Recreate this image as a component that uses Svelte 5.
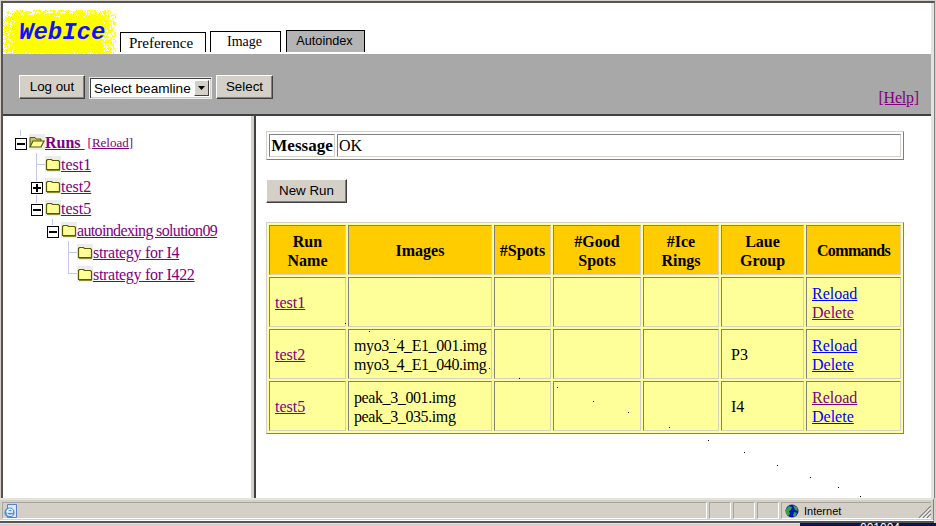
<script>
  let seed = 7;
  function rnd() {
    seed = (seed * 16807) % 2147483647;
    return seed / 2147483647;
  }
  function logoPath() {
    let d = '';
    for (let y = 0; y < 44; y++) {
      for (let x = 0; x < 113; x++) {
        const dx = Math.max(13 - x, x - 97, 0);
        const dy = Math.max(7 - y, y - 41, 0);
        const dist = dx + dy * 1.5;
        let p = 1;
        if (dist > 0) p = Math.max(0.97 - dist * 0.045, 0.2);
        if (y < 6 && x > 70) p = Math.min(p, 0.9);
        if (rnd() < p) d += `M${x} ${y}h1v1h-1z`;
      }
    }
    return d;
  }
  const logo = logoPath();

  const tree = [
    { depth: 1, label: 'test1', fit: '' },
    { depth: 1, label: 'test2', box: 'plus', fit: '' },
    { depth: 1, label: 'test5', box: 'minus', fit: '' },
    { depth: 2, label: 'autoindexing solution09', box: 'minus', fit: 'tighter' },
    { depth: 3, label: 'strategy for I4', fit: 'tight' },
    { depth: 3, label: 'strategy for I422', fit: 'tight' }
  ];

  const rows = [
    { name: 'test1', images: [], laue: '', reloadSeen: false, deleteSeen: true },
    { name: 'test2', images: ['myo3_4_E1_001.img', 'myo3_4_E1_040.img'], laue: 'P3', reloadSeen: false, deleteSeen: false },
    { name: 'test5', images: ['peak_3_001.img', 'peak_3_035.img'], laue: 'I4', reloadSeen: true, deleteSeen: false }
  ];

  const dots = [
    [345, 322], [369, 330], [394, 338], [453, 357], [489, 367], [519, 377], [557, 386], [593, 400],
    [628, 411], [669, 426], [708, 439], [744, 451], [777, 464], [810, 476], [838, 486], [860, 495]
  ];
</script>

<div class="window">
  <div class="page">
    <header class="head">
      <div class="logo">
        <svg width="113" height="44" viewBox="0 0 113 44"><path d={logo} fill="#ffff00" /></svg>
        <span class="logo-text">WebIce</span>
      </div>
      <div class="tab t1">Preference</div>
      <div class="tab t2">Image</div>
      <div class="tab t3">Autoindex</div>
    </header>

    <div class="band">
      <button class="btn logout">Log out</button>
      <div class="select">
        <span class="select-text">Select beamline</span>
        <span class="arrow"><svg width="7" height="4" viewBox="0 0 7 4"><path d="M0 0h7L3.500 4z" fill="#000" /></svg></span>
      </div>
      <button class="btn sel">Select</button>
      <a class="help visited" href="#h">[Help]</a>
    </div>

    <div class="main">
      <aside class="left">
        <svg class="lines" width="248" height="382" viewBox="0 0 248 382">
          <g stroke="#c6c6f0" fill="none" shape-rendering="crispEdges">
            <path d="M17.500 14v6" />
            <path d="M33.500 37v28M33.500 48h9M33.500 79v8" />
            <path d="M49.500 103v6" />
            <path d="M65.500 125v33M65.500 136h9M65.500 157.500h9" />
          </g>
        </svg>
        <div class="row root">
          <span class="box"><i class="bar"></i></span>
          <span class="folder">
            <svg width="16" height="16" viewBox="0 0 16 16">
              <path d="M1 13V3.500h5l1 1.500h5v2" fill="#c9c46a" stroke="#5a5a00" />
              <path d="M1 13l3-6h11l-3 6z" fill="#ffff99" stroke="#5a5a00" stroke-width="1.200" />
            </svg>
          </span>
          <a class="visited runs" href="#r">Runs&nbsp;</a>
          <a class="visited small" href="#r">[Reload]</a>
        </div>
        {#each tree as item}
          <div class="row" style="padding-left:{item.depth * 16}px">
            <span class="box" class:none={!item.box}>
              {#if item.box}
                <i class="bar"></i>
                {#if item.box === 'plus'}<i class="bar v"></i>{/if}
              {/if}
            </span>
            <span class="folder">
              <svg width="16" height="16" viewBox="0 0 16 16">
                <path d="M1.500 13.500V4.500l1-1h4l1 1h6l1 1v8z" fill="#ffff99" stroke="#5a5a00" stroke-width="1.200" />
                <path d="M2 14.500h13" stroke="#8a8a40" />
              </svg>
            </span>
            <a class="visited {item.fit}" href="#t">{item.label}</a>
          </div>
        {/each}
      </aside>

      <div class="divider"></div>

      <section class="right">
        <table class="msg">
          <tbody>
            <tr>
              <th>Message</th>
              <td>OK</td>
            </tr>
          </tbody>
        </table>

        <button class="btn newrun">New Run</button>

        <table class="data">
          <colgroup>
            <col class="c1" /><col class="c2" /><col class="c3" /><col class="c4" />
            <col class="c5" /><col class="c6" /><col class="c7" />
          </colgroup>
          <thead>
            <tr>
              <th>Run<br />Name</th>
              <th>Images</th>
              <th>#Spots</th>
              <th>#Good<br />Spots</th>
              <th>#Ice<br />Rings</th>
              <th>Laue<br />Group</th>
              <th class="tighter">Commands</th>
            </tr>
          </thead>
          <tbody>
            {#each rows as r}
              <tr>
                <td><a class="visited" href="#n">{r.name}</a></td>
                <td class="images">
                  {#each r.images as img}<div>{img}</div>{/each}
                </td>
                <td></td>
                <td></td>
                <td></td>
                <td>{#if r.laue}&nbsp;{r.laue}{/if}</td>
                <td>
                  <div><a class:visited={r.reloadSeen} href="#l">Reload</a></div>
                  <div><a class:visited={r.deleteSeen} href="#d">Delete</a></div>
                </td>
              </tr>
            {/each}
          </tbody>
        </table>
      </section>
    </div>
  </div>

  <footer class="status">
    <span class="pane first">
      <svg width="16" height="16" viewBox="0 0 16 16">
        <path d="M4.500 1.500h9v13h-9z" fill="#dbe6f7" stroke="#5b7fc0" />
        <circle cx="6.500" cy="9.500" r="5" fill="#4a8fe0" />
        <path d="M3.500 9h6.500M4 9c0-3 5-4 5.500-1M9.500 11.500c-1.500 1.500-4.500 1-5.500-1" stroke="#fff" stroke-width="1.300" fill="none" />
      </svg>
    </span>
    <span class="pane fill"></span>
    <span class="pane small-pane"></span>
    <span class="pane small-pane"></span>
    <span class="pane small-pane"></span>
    <span class="pane zone">
      <svg width="14" height="14" viewBox="0 0 14 14">
        <circle cx="7" cy="7" r="6.500" fill="#0a10c8" />
        <path d="M1 5l3-3 3 1-1 3-2 1 1 3-2 2-2-3zM8 1l4 2 1 4-3-1zM9 8l3 1-2 4-2-1z" fill="#35a832" />
      </svg>
      <span>Internet</span>
      <svg class="grip" width="13" height="13" viewBox="0 0 13 13">
        <path d="M1 13L13 1M5 13l8-8M9 13l4-4" stroke="#808080" stroke-width="1.200" />
        <path d="M2.500 13L13 2.500M6.500 13L13 6.500M10.500 13L13 10.500" stroke="#fff" />
      </svg>
    </span>
  </footer>
  <div class="tail"></div>

  <div class="taskbar"><span>001004</span></div>

  {#each dots as d}
    <i class="dot" style="left:{d[0]}px;top:{d[1]}px"></i>
  {/each}
</div>

<style>
  :global(body) {
    margin: 0;
    background: #d4d0c8;
  }
  .window {
    position: relative;
    width: 936px;
    height: 526px;
    overflow: hidden;
    box-sizing: border-box;
    background: #d4d0c8;
    border-top: 1px solid #d4d0c8;
    font: 16px/19px "Liberation Serif", serif;
    color: #000;
  }
  .page {
    box-sizing: border-box;
    width: 934px;
    border-top: 2px solid #555;
    border-left: 2px solid #555;
    border-right: 1px solid #808080;
    margin-left: 1px;
    padding-right: 3px;
    background: #e6e3dc;
  }
  a {
    color: #0000ff;
  }
  a.visited {
    color: #800080;
  }
  .tight {
    letter-spacing: -0.3px;
  }
  .tighter {
    letter-spacing: -0.65px;
  }
  .head {
    display: flex;
    align-items: flex-end;
    height: 51px;
    background: #fff;
  }
  .logo {
    position: relative;
    width: 113px;
    height: 44px;
    margin-right: 4px;
    align-self: flex-end;
    flex: none;
  }
  .logo svg {
    display: block;
  }
  .logo-text {
    position: absolute;
    left: 16px;
    top: 10px;
    font: italic bold 24px/26px "Liberation Mono", monospace;
    color: #1010ff;
  }
  .tab {
    box-sizing: border-box;
    border: 1px solid #000;
    border-bottom: 0;
    text-align: center;
    background: #fff;
    margin-bottom: 2px;
  }
  .t1 {
    width: 86px;
    height: 20px;
    font-size: 15px;
    line-height: 21px;
    margin-right: 4px;
    padding-right: 4px;
  }
  .t2 {
    width: 71px;
    height: 21px;
    font-size: 14px;
    line-height: 20px;
    margin-right: 5px;
    padding-right: 2px;
  }
  .t3 {
    width: 79px;
    height: 22px;
    font: 12.700px/21px "Liberation Sans", sans-serif;
    background: #b4b4b4;
    padding-right: 2px;
  }
  .band {
    display: flex;
    align-items: flex-start;
    height: 60px;
    box-sizing: content-box;
    padding-left: 16px;
    background: #a8a8a8;
    border-bottom: 2px solid #404040;
    position: relative;
  }
  .btn {
    box-sizing: border-box;
    display: block;
    padding: 0;
    height: 24px;
    font: 13.330px/20px "Liberation Sans", sans-serif;
    color: #000;
    background: #d4d0c8;
    border: 1px solid;
    border-color: #fff #404040 #404040 #fff;
    box-shadow: inset -1px -1px 0 #808080;
  }
  .logout {
    width: 66px;
    margin-top: 21px;
    margin-right: 4px;
  }
  .sel {
    width: 57px;
    margin-top: 21px;
    margin-left: 4px;
  }
  .select {
    box-sizing: border-box;
    display: flex;
    align-items: center;
    justify-content: space-between;
    width: 123px;
    height: 22px;
    margin-top: 23px;
    padding: 0 2px 0 4px;
    background: #fff;
    border: 1px solid #e8e8e8;
    box-shadow: inset 1px 1px 0 #404040, inset -1px -1px 0 #d4d0c8;
    font: 13.600px/18px "Liberation Sans", sans-serif;
    white-space: nowrap;
  }
  .select-text {
    padding-top: 1px;
  }
  .arrow {
    box-sizing: border-box;
    display: flex;
    align-items: center;
    justify-content: center;
    flex: none;
    width: 15px;
    height: 16px;
    background: #d4d0c8;
    border: 1px solid;
    border-color: #fff #404040 #404040 #fff;
  }
  .help {
    margin-left: auto;
    margin-right: 12px;
    margin-top: 34px;
    letter-spacing: -0.2px;
  }
  .main {
    display: flex;
    height: 382px;
  }
  .left {
    position: relative;
    width: 248px;
    box-sizing: border-box;
    padding: 15px 0 0 12px;
    background: #fff;
    flex: none;
  }
  .lines {
    position: absolute;
    left: 0;
    top: 0;
    pointer-events: none;
  }
  .row {
    position: relative;
    display: flex;
    align-items: center;
    height: 22px;
    white-space: nowrap;
  }
  .box {
    box-sizing: border-box;
    position: relative;
    display: block;
    flex: none;
    width: 12px;
    height: 12px;
    margin: 4px 2px 0 0;
    border: 1px solid #000;
    background: #fff;
  }
  .box.none {
    border: 0;
    background: none;
  }
  .bar {
    position: absolute;
    left: 1px;
    top: 4px;
    width: 8px;
    height: 2px;
    background: #000;
  }
  .bar.v {
    left: 4px;
    top: 1px;
    width: 2px;
    height: 8px;
  }
  .folder {
    display: block;
    flex: none;
    width: 16px;
    height: 16px;
    background: #ececec;
  }
  .folder svg {
    display: block;
  }
  .runs {
    font-weight: bold;
  }
  .small {
    font-size: 13px;
    margin-left: 3px;
  }
  .divider {
    width: 5px;
    flex: none;
    box-sizing: border-box;
    background: #d4d0c8;
    border-right: 2px solid #404040;
  }
  .right {
    flex: 1;
    min-width: 0;
    box-sizing: border-box;
    padding: 15px 0 0 10px;
    background: #fff;
  }
  table {
    box-sizing: border-box;
    width: 638px;
    table-layout: fixed;
    border-collapse: separate;
    border-spacing: 2px;
    border: 1px solid;
    border-color: #d4d0c8 #808080 #808080 #d4d0c8;
  }
  th,
  td {
    box-sizing: border-box;
    padding: 0;
    border: 1px solid;
    border-color: #808080 #d4d0c8 #d4d0c8 #808080;
  }
  .msg {
    height: 29px;
  }
  .msg th {
    width: 66px;
    height: 23px;
    font-size: 17px;
    text-align: center;
    padding: 0;
  }
  .msg td {
    padding-left: 1px;
  }
  .newrun {
    width: 81px;
    margin: 19px 0;
  }
  .data {
    background: #ffff99;
  }
  .c1 { width: 77px; }
  .c2 { width: 144px; }
  .c3 { width: 57px; }
  .c4 { width: 88px; }
  .c5 { width: 76px; }
  .c6 { width: 83px; }
  .c7 { width: 95px; }
  .data th {
    height: 50px;
    padding-top: 1px;
    background: #ffcc00;
    text-align: center;
  }
  .data td {
    height: 50px;
    background: #ffff99;
    padding: 1px 0 0 5px;
    white-space: nowrap;
    overflow: hidden;
  }
  .data td.images {
    letter-spacing: -0.4px;
  }
  .status {
    display: flex;
    box-sizing: border-box;
    height: 23px;
    padding: 2px 2px 0 2px;
    width: 934px;
    background: #d4d0c8;
    border-top: 2px solid #e6e3dc;
    border-bottom: 1px solid #fff;
    border-right: 1px solid #808080;
    font: 11px "Liberation Sans", sans-serif;
  }
  .pane {
    box-sizing: border-box;
    display: flex;
    align-items: center;
    height: 17px;
    border: 1px solid;
    border-color: #a8a59d #fff #fff #a8a59d;
    margin-right: 2px;
  }
  .first {
    width: 18px;
    margin-right: 0;
    border-right: 0;
  }
  .fill {
    flex: 1;
    border-left: 0;
  }
  .small-pane {
    width: 22px;
  }
  .zone {
    position: relative;
    width: 150px;
    margin-right: 0;
    padding-left: 3px;
    gap: 5px;
    border-right: 0;
  }
  .grip {
    position: absolute;
    right: 0;
    bottom: 0;
  }
  .tail {
    box-sizing: border-box;
    width: 934px;
    height: 3px;
    border-top: 2px solid #555;
    background: #e6e3dc;
  }
  .taskbar {
    position: absolute;
    left: 800px;
    right: 0;
    top: 522px;
    height: 3px;
    overflow: hidden;
    background: #0a1450;
    color: #fff;
    font: 12px/12px "Liberation Sans", sans-serif;
    padding-left: 60px;
  }
  .taskbar span {
    display: block;
    margin-top: -1px;
  }
  .dot {
    position: absolute;
    width: 1px;
    height: 1px;
    background: #000;
  }
</style>
